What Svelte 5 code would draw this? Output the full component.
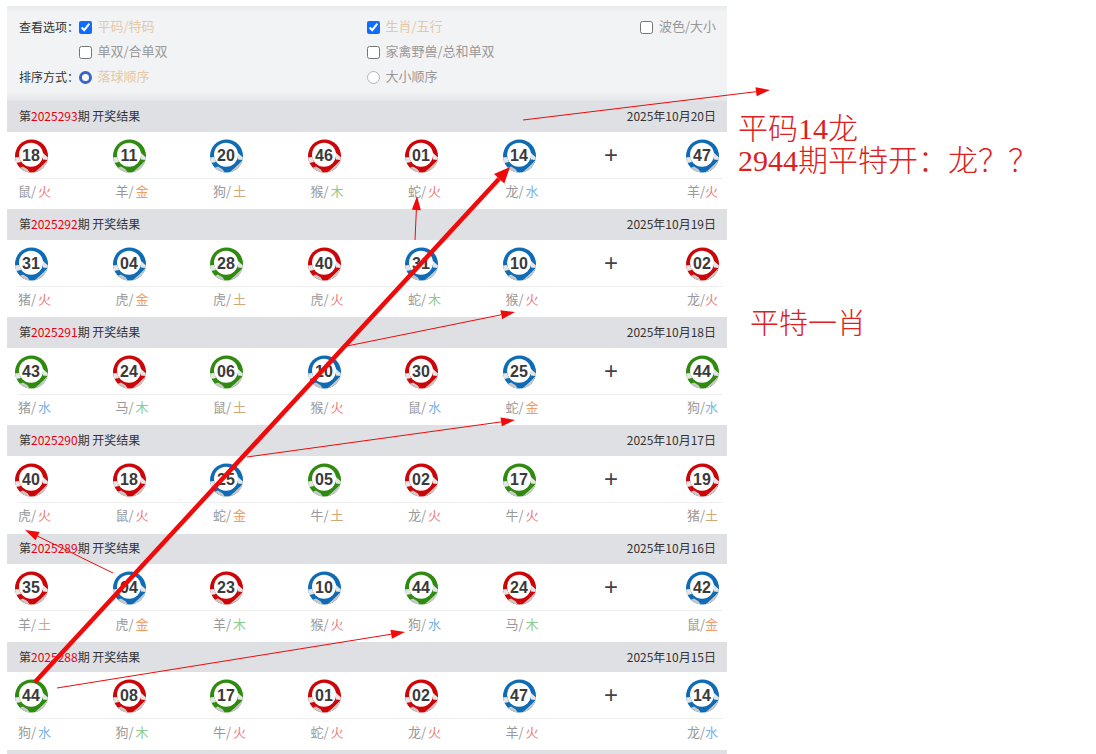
<script>
  const rows = [
    ['2025293','2025年10月20日',[['18','r','鼠','火'],['11','g','羊','金'],['20','b','狗','土'],['46','r','猴','木'],['01','r','蛇','火'],['14','b','龙','水']],['47','b','羊','火']],
    ['2025292','2025年10月19日',[['31','b','猪','火'],['04','b','虎','金'],['28','g','虎','土'],['40','r','虎','火'],['31','b','蛇','木'],['10','b','猴','火']],['02','r','龙','火']],
    ['2025291','2025年10月18日',[['43','g','猪','水'],['24','r','马','木'],['06','g','鼠','土'],['10','b','猴','火'],['30','r','鼠','水'],['25','b','蛇','金']],['44','g','狗','水']],
    ['2025290','2025年10月17日',[['40','r','虎','火'],['18','r','鼠','火'],['25','b','蛇','金'],['05','g','牛','土'],['02','r','龙','火'],['17','g','牛','火']],['19','r','猪','土']],
    ['2025289','2025年10月16日',[['35','r','羊','土'],['04','b','虎','金'],['23','r','羊','木'],['10','b','猴','火'],['44','g','狗','水'],['24','r','马','木']],['42','b','鼠','金']],
    ['2025288','2025年10月15日',[['44','g','狗','水'],['08','r','狗','木'],['17','g','牛','火'],['01','r','蛇','火'],['02','r','龙','火'],['47','b','羊','火']],['14','b','龙','水']]
  ];
  const elem = { 火: 'fire', 金: 'gold', 土: 'earth', 木: 'wood', 水: 'water' };

  function arrow(x1, y1, x2, y2, len, half, w) {
    const d = Math.hypot(x2 - x1, y2 - y1);
    const ux = (x2 - x1) / d, uy = (y2 - y1) / d;
    const bx = x2 - ux * len, by = y2 - uy * len;
    return {
      x1, y1, x2: bx, y2: by, w,
      pts: `${x2},${y2} ${bx - uy * half},${by + ux * half} ${bx + uy * half},${by - ux * half}`
    };
  }
  const arrows = [
    arrow(523, 120, 770, 90, 14, 4.5, 1),
    arrow(415, 240, 417, 196, 14, 4.5, 1),
    arrow(347, 346, 515, 312, 14, 4.5, 1),
    arrow(247, 457, 515, 420, 14, 4.5, 1),
    arrow(113, 573, 25, 530, 14, 4.5, 1),
    arrow(57, 688, 405, 632, 14, 4.5, 1),
    arrow(35, 682, 510, 167, 16, 7, 4.5)
  ];
</script>

{#snippet ball(num, color)}
  <svg class="ball {color}" viewBox="0 0 34 34" width="34" height="34">
    <circle class="fill" cx="17.5" cy="17" r="16.5" />
    <path class="gray" d="M5.8 28.7A16.5 16.5 0 0 0 15.8 33.4L13.5 30.2 9 27.5Z" />
    <path class="gray" d="M33.5 21A16.5 16.5 0 0 1 20.5 33.2L25 29.6 29.8 25Z" />
    <path class="soft" d="M28 13 33.9 18.4 33.6 21 29 20.5Z" />
    <path class="soft" d="M1 18.5 5 18 7 23 2.2 24Z" />
    <circle class="white" cx="17" cy="15.7" r="12" />
    <text x="17" y="22" text-anchor="middle">{num}</text>
  </svg>
{/snippet}

{#snippet label(cell, spaced)}
  <span class="label">{cell[2]}/<span class={spaced ? `${elem[cell[3]]} gap` : elem[cell[3]]}>{cell[3]}</span></span>
{/snippet}

<div class="page">
  <main class="board">
    <section class="options">
      <span class="opt-title">查看选项：</span>
      <label class="opt on"><input type="checkbox" checked />平码/特码</label>
      <label class="opt on"><input type="checkbox" checked />生肖/五行</label>
      <label class="opt"><input type="checkbox" />波色/大小</label>

      <span></span>
      <label class="opt"><input type="checkbox" />单双/合单双</label>
      <label class="opt"><input type="checkbox" />家禽野兽/总和单双</label>
      <span></span>

      <span class="opt-title">排序方式：</span>
      <label class="opt on"><input class="radio" type="radio" name="sort" checked />落球顺序</label>
      <label class="opt"><input class="radio" type="radio" name="sort" />大小顺序</label>
      <span></span>
    </section>

    {#each rows as row}
      <section class="draw">
        <header class="draw-head">
          <span>第<em>{row[0]}</em>期 开奖结果</span>
          <span>{row[1]}</span>
        </header>
        <div class="balls">
          {#each row[2] as c}
            <div>{@render ball(c[0], c[1])}</div>
          {/each}
          <div class="plus">+</div>
          <div>{@render ball(row[3][0], row[3][1])}</div>
        </div>
        <div class="labels">
          {#each row[2] as c}
            <div>{@render label(c, true)}</div>
          {/each}
          <div></div>
          <div>{@render label(row[3], false)}</div>
        </div>
      </section>
    {/each}
    <div class="draw-head stub"></div>
  </main>

  <svg class="marks" viewBox="0 0 1096 754" width="1096" height="754">
    {#each arrows as a}
      <line x1={a.x1} y1={a.y1} x2={a.x2} y2={a.y2} stroke-width={a.w} />
      <polygon points={a.pts} />
    {/each}
  </svg>
  <div class="note note-a">平码14龙<br />2944期平特开：龙？？</div>
  <div class="note note-b">平特一肖</div>
</div>

<style>
  :global(body) {
    margin: 0;
    background: #fff;
    overflow: hidden;
  }
  .page {
    position: relative;
    width: 1096px;
    height: 754px;
    overflow: hidden;
    padding-top: 6px;
    box-sizing: border-box;
    font-family: "Noto Sans CJK SC", "Liberation Sans", sans-serif;
  }
  .board {
    width: 720px;
    margin-left: 7px;
  }
  .options {
    height: 95px;
    box-sizing: border-box;
    padding: 7.5px 11px 0 12px;
    display: grid;
    grid-template-columns: 60px 288px 1fr auto;
    grid-auto-rows: 25px;
    align-items: center;
    background: linear-gradient(#e9eaec 0, #f2f3f5 6px, #f2f3f5 84px, #e6e7ea 95px);
    font-size: 13px;
  }
  .opt-title {
    font-size: 12px;
    color: #333;
    white-space: nowrap;
  }
  .opt {
    display: flex;
    align-items: center;
    gap: 5.5px;
    color: #999;
    line-height: 18px;
    white-space: nowrap;
  }
  .opt.on {
    color: #e4c9a8;
  }
  .opt input {
    width: 13px;
    height: 13px;
    margin: 3px 0 0;
    flex: none;
    accent-color: #0d6efd;
  }
  .opt input.radio {
    appearance: none;
    border-radius: 50%;
    border: 1px solid #b4b4b8;
    background: #fff;
    box-sizing: border-box;
  }
  .opt input.radio:checked {
    border: 3.5px solid #3b66c4;
  }
  .draw {
    height: 108.17px;
  }
  .draw-head {
    height: 30.5px;
    box-sizing: border-box;
    display: flex;
    justify-content: space-between;
    align-items: center;
    padding: 0 11px 2px 12px;
    background: #dfe0e4;
    font-size: 12px;
    color: #333;
  }
  .draw-head em {
    font-style: normal;
    color: #e60012;
  }
  .stub {
    height: 10px;
  }
  .balls {
    display: grid;
    grid-template-columns: repeat(6, 97.5px) 86px 34px;
    height: 46px;
    padding: 7px 0 0 7px;
    box-sizing: border-box;
  }
  .ball {
    display: block;
  }
  .ball text {
    font-family: "Liberation Sans", sans-serif;
    font-size: 16px;
    font-weight: 700;
    fill: #3a3a3a;
  }
  .r .fill { fill: #cc0508; }
  .g .fill { fill: #2f8a10; }
  .b .fill { fill: #0f6cb4; }
  .gray { fill: #c8c8c8; }
  .soft { fill: #e6e6e6; }
  .white { fill: #fff; }
  .plus {
    font-family: "Liberation Sans", sans-serif;
    font-size: 24px;
    line-height: 32px;
    color: #444;
    padding-left: 5px;
  }
  .labels {
    display: grid;
    grid-template-columns: repeat(6, 97.5px) 84px 36px;
    margin: 0 4px 0 11px;
    border-top: 1px solid #eee;
    height: 31px;
    padding-bottom: 6px;
    box-sizing: border-box;
    align-items: center;
    font-size: 13px;
    color: #999;
  }
  .label {
    white-space: nowrap;
  }
  .gap { margin-left: 2px; }
  .fire { color: #ea7a7a; }
  .gold { color: #ee9d66; }
  .earth { color: #cfa975; }
  .wood { color: #8ccb8c; }
  .water { color: #78b2e6; }
  .marks {
    position: absolute;
    left: 0;
    top: 0;
    pointer-events: none;
  }
  .marks line { stroke: #f00a0a; }
  .marks polygon { fill: #f00a0a; }
  .note {
    position: absolute;
    color: #dc2020;
    font-family: "Liberation Serif", "Noto Sans CJK SC", serif;
    font-weight: 300;
    white-space: nowrap;
  }
  .note-a {
    left: 738px;
    top: 113px;
    font-size: 30px;
    line-height: 32px;
  }
  .note-b {
    left: 750px;
    top: 307px;
    font-size: 29px;
    line-height: 34px;
  }
</style>
